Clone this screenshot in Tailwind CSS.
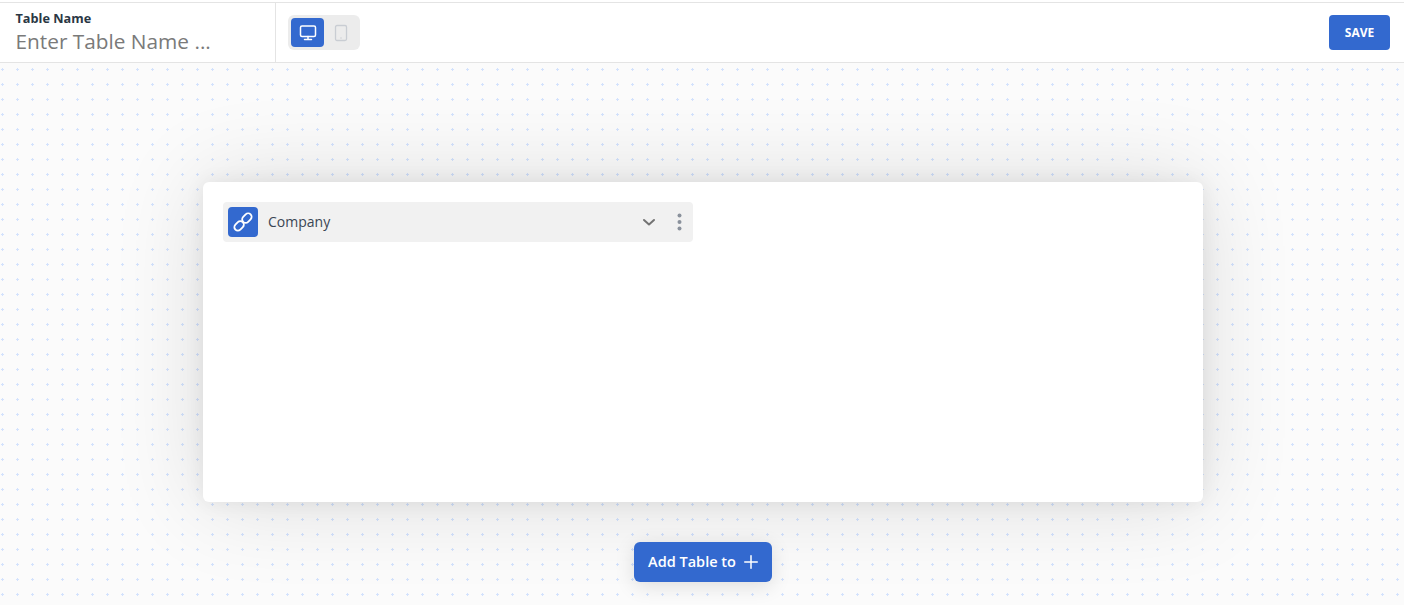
<!DOCTYPE html>
<html lang="en">
<head>
    <meta charset="UTF-8">
    <meta name="viewport" content="width=device-width, initial-scale=1.0">
    <title>Table Builder</title>
    <script src="https://cdn.jsdelivr.net/npm/@tailwindcss/browser@4"></script>
</head>
<body class="h-[605px] overflow-hidden bg-white font-['Open_Sans',sans-serif]">
    <!-- Top bar -->
    <header class="mt-[2px] flex h-[61px] items-stretch justify-between border-y border-[#e4e4e4] bg-white">
        <div class="flex">
            <div class="w-[276px] border-r border-[#e4e4e4] pl-[15.5px] pt-[7px]">
                <label class="block text-[12.7px] leading-[16px] font-bold text-[#2a3744]">Table Name</label>
                <div class="mt-[1px] text-[20.8px] leading-[28px] text-[#7a7a7a]">Enter Table Name ...</div>
            </div>
            <div class="ml-[12px] mt-[12px] flex h-[35px] w-[72px] items-center rounded-[6px] bg-[#ececec] pl-[3px]">
                <button class="flex h-[29px] w-[33px] items-center justify-center rounded-[4px] bg-[#3369cf]">
                    <svg class="h-[20px] w-[20px]" viewBox="0 0 20 20" fill="none" stroke="#fff" stroke-width="1.5" stroke-linecap="round" stroke-linejoin="round"><rect x="2.5" y="3" width="15" height="10.5" rx="1.5"/><path d="M10 13.5v3M6.5 16.5h7"/></svg>
                </button>
                <button class="flex h-[29px] w-[33px] items-center justify-center">
                    <svg class="h-[20px] w-[20px]" viewBox="0 0 20 20" fill="none" stroke="#c9cdd3" stroke-width="1.3"><rect x="4.5" y="2.5" width="11" height="15" rx="1.5"/><path d="M9.5 15h1"/></svg>
                </button>
            </div>
        </div>
        <div class="pr-[14px] pt-[12px]">
            <button class="h-[35px] w-[61px] rounded-[4px] bg-[#3369cf] text-[12px] font-bold text-white">SAVE</button>
        </div>
    </header>

    <!-- Canvas -->
    <main class="relative h-[542px] overflow-hidden bg-[#fbfbfb]">
        <svg class="absolute inset-0 h-full w-full" aria-hidden="true">
            <defs>
                <pattern id="dots" x="0" y="0" width="15" height="15" patternUnits="userSpaceOnUse">
                    <path d="M1 6.5h3M2.5 5v3" stroke="#d3e2fd" stroke-width="1"/>
                </pattern>
            </defs>
            <rect width="100%" height="100%" fill="url(#dots)"/>
        </svg>

        <div class="relative flex flex-col items-center pl-[2px] pt-[119px]">
            <section class="h-[320px] w-[1000px] rounded-[6px] bg-white p-[20px] shadow-[0_0_20px_rgba(0,0,0,0.07),0_0_90px_rgba(0,0,0,0.13)]">
                <div class="flex h-[40px] w-[470px] items-center rounded-[4px] bg-[#f1f1f1] pl-[5px]">
                    <span class="flex h-[30px] w-[30px] items-center justify-center rounded-[4px] bg-[#3369cf]">
                        <svg class="h-[20px] w-[20px]" viewBox="0 0 20 20" fill="none" stroke="#fff" stroke-width="1.8"><rect x="8.65" y="2.6" width="10.5" height="7" rx="3.5" transform="rotate(-45 13.9 6.1)"/><rect x="0.85" y="10.4" width="10.5" height="7" rx="3.5" transform="rotate(-45 6.1 13.9)"/></svg>
                    </span>
                    <span class="ml-[10px] flex-1 pb-[2px] text-[14px] text-[#3a4654]">Company</span>
                    <svg class="h-[12px] w-[14px]" viewBox="0 0 14 12" fill="none" stroke="#737373" stroke-width="2" stroke-linecap="round" stroke-linejoin="round"><path d="M2 4l5 4.5L12 4"/></svg>
                    <svg class="ml-[21px] mr-[11px] h-[20px] w-[5px]" viewBox="0 0 5 20" fill="#8a919c"><circle cx="2.5" cy="3.5" r="2"/><circle cx="2.5" cy="10" r="2"/><circle cx="2.5" cy="16.5" r="2"/></svg>
                </div>
            </section>
            <button class="mt-[40px] flex h-[40px] w-[138px] items-center justify-center gap-[8px] rounded-[6px] bg-[#3369cf] text-[14.5px] font-semibold text-white shadow-[0_4px_20px_rgba(0,0,0,0.12)]">
                Add Table to
                <svg class="h-[14px] w-[14px]" viewBox="0 0 14 14" fill="none" stroke="#fff" stroke-width="1.5" stroke-linecap="round"><path d="M7 .75v12.5M.75 7h12.5"/></svg>
            </button>
        </div>
    </main>
</body>
</html>
